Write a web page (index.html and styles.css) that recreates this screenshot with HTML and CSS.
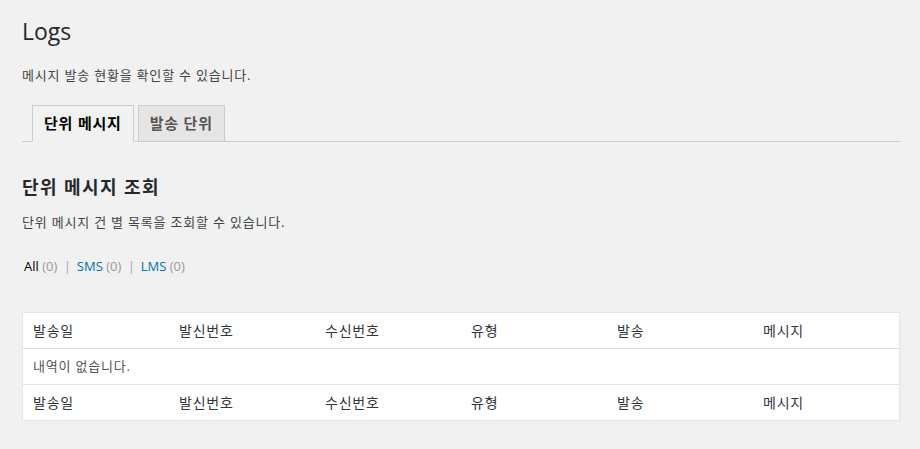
FILE: index.html
```html
<!DOCTYPE html>
<html lang="ko">
<head>
<meta charset="UTF-8">
<title>Logs</title>
<link rel="stylesheet" href="styles.css">
</head>
<body>
<div class="wrap">
    <h1>Logs</h1>
    <p class="intro">메시지 발송 현황을 확인할 수 있습니다.</p>

    <nav class="nav-tab-wrapper">
        <a class="nav-tab nav-tab-active" href="#">단위 메시지</a>
        <a class="nav-tab" href="#">발송 단위</a>
    </nav>

    <h2>단위 메시지 조회</h2>
    <p class="desc">단위 메시지 건 별 목록을 조회할 수 있습니다.</p>

    <ul class="subsubsub">
        <li><a class="current" href="#">All <span class="count">(0)</span></a> |</li>
        <li><a href="#">SMS <span class="count">(0)</span></a> |</li>
        <li><a href="#">LMS <span class="count">(0)</span></a></li>
    </ul>

    <table class="widefat">
        <thead>
            <tr>
                <th>발송일</th>
                <th>발신번호</th>
                <th>수신번호</th>
                <th>유형</th>
                <th>발송</th>
                <th>메시지</th>
            </tr>
        </thead>
        <tbody>
            <tr>
                <td colspan="6">내역이 없습니다.</td>
            </tr>
        </tbody>
        <tfoot>
            <tr>
                <th>발송일</th>
                <th>발신번호</th>
                <th>수신번호</th>
                <th>유형</th>
                <th>발송</th>
                <th>메시지</th>
            </tr>
        </tfoot>
    </table>
</div>
</body>
</html>
```

FILE: styles.css
```css
body {
    margin: 0;
    background: #f1f1f1;
    color: #444;
    font-family: "Open Sans", "Noto Sans CJK KR", sans-serif;
    font-size: 13px;
}
.wrap {
    margin: 0 20px 0 22px;
}
h1 {
    margin: 0;
    padding: 17px 0 0;
    font-size: 23px;
    font-weight: 400;
    line-height: 29px;
    color: #23282d;
}
.intro {
    margin: 19px 0 0;
    line-height: 20px;
    letter-spacing: .8px;
}
.nav-tab-wrapper {
    display: flex;
    margin-top: 20px;
    padding-left: 10px;
    border-bottom: 1px solid #ccc;
}
.nav-tab {
    margin-bottom: -1px;
    margin-right: 4px;
    padding: 6px 11px;
    border: 1px solid #ccc;
    background: #e5e5e5;
    color: #555;
    font-size: 15px;
    font-weight: 600;
    line-height: 23px;
    letter-spacing: .8px;
    text-decoration: none;
}
.nav-tab-active {
    background: #f1f1f1;
    border-bottom-color: #f1f1f1;
    color: #000;
}
h2 {
    margin: 33px 0 0;
    font-size: 18px;
    font-weight: 600;
    line-height: 24px;
    letter-spacing: 1.4px;
    color: #23282d;
}
.desc {
    margin: 13px 0 0;
    line-height: 20px;
    letter-spacing: .8px;
}
.subsubsub {
    display: flex;
    margin: 24px 0 0;
    padding: 0 0 0 2px;
    list-style: none;
    color: #a0a5aa;
    line-height: 20px;
}
.subsubsub li {
    margin-right: 6px;
}
.subsubsub a {
    margin-right: 3px;
    color: #0073aa;
    text-decoration: none;
}
.subsubsub a.current {
    color: #000;
}
.subsubsub .count {
    color: #999;
}
.widefat {
    width: 100%;
    margin-top: 36px;
    border: 1px solid #e5e5e5;
    border-spacing: 0;
    background: #fff;
    box-shadow: 0 1px 1px rgba(0, 0, 0, .04);
    table-layout: fixed;
}
.widefat th,
.widefat td {
    padding: 8px 10px;
    text-align: left;
    line-height: 19px;
    letter-spacing: .8px;
}
.widefat th {
    font-size: 14px;
    font-weight: 400;
    color: #32373c;
}
.widefat thead th {
    border-bottom: 1px solid #e1e1e1;
}
.widefat tfoot th {
    border-top: 1px solid #e1e1e1;
}
.widefat td {
    color: #555;
}
```
